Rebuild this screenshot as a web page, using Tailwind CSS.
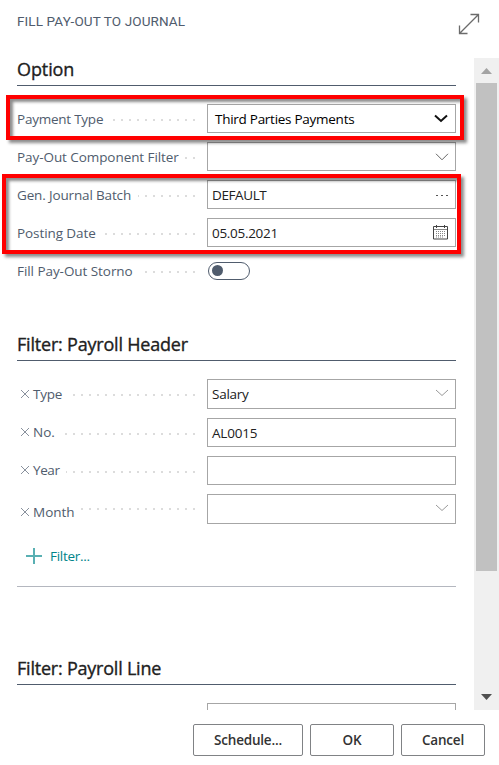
<!DOCTYPE html>
<html lang="en">
<head>
<meta charset="utf-8">
<title>Fill Pay-Out to Journal</title>
<script src="https://cdn.jsdelivr.net/npm/@tailwindcss/browser@4"></script>
</head>
<body class="bg-white">
<div class="relative flex flex-col w-[499px] h-[765px] overflow-hidden bg-white font-['Open_Sans','Noto_Sans',sans-serif] text-[14px] leading-5 text-[#505c6d]">
  <header class="flex justify-between h-[58px] shrink-0 pl-[17px] pr-[19px]">
    <h1 class="pt-[11px] font-['Roboto',sans-serif] text-[13.5px] tracking-[0.12px] whitespace-nowrap">FILL PAY-OUT TO JOURNAL</h1>
    <svg class="mt-[13px] w-[22px] h-[22px]" viewBox="0 0 22 22" fill="none" stroke="#6b6b6b" stroke-width="1.3"><path d="M1.500 20.500 20.500 1.500M12.500 1.500h8v8M1.500 12.500v8h8"/></svg>
  </header>

  <div class="flex h-[652px] shrink-0 overflow-hidden">
    <main class="w-[439px] ml-[17px] shrink-0 text-[13.5px]">
      <section class="h-[263px]">
        <h2 class="h-7 border-b border-[#505c6d] text-[18px] leading-[23px] tracking-[-0.1px] [-webkit-text-stroke:0.35px_#212121] text-[#212121] whitespace-nowrap">Option</h2>
        <div class="flex flex-col gap-[9px] pt-[18px]">
          <div class="flex h-[29px] items-center justify-between">
            <div class="flex w-[178px] items-center justify-between"><span class="whitespace-nowrap tracking-[-0.24px]">Payment Type</span><i class="mt-0.5 h-0.5 w-[82px] shrink-0 bg-[linear-gradient(90deg,transparent_6px,#dcdcdc_6px)] bg-[length:8px_2px] bg-right"></i></div>
            <div class="flex w-[249px] h-full items-center justify-between border border-[#a6a6a6] pl-[7px] pr-[7px] text-black"><span class="whitespace-nowrap tracking-[-0.27px]">Third Parties Payments</span><svg class="w-[14px] h-[9px]" viewBox="0 0 14 9" fill="none" stroke="#111" stroke-width="2"><path d="m1 1.500 6 5.500 6-5.500"/></svg></div>
          </div>
          <div class="flex h-[29px] items-center justify-between">
            <div class="flex w-[178px] items-center justify-between"><span class="whitespace-nowrap tracking-[-0.07px]">Pay-Out Component Filter</span><i class="mt-0.5 h-0.5 w-[10px] shrink-0 bg-[linear-gradient(90deg,transparent_6px,#dcdcdc_6px)] bg-[length:8px_2px] bg-right"></i></div>
            <div class="flex w-[249px] h-full items-center justify-end border border-[#a6a6a6] pr-[6px]"><svg class="w-[14px] h-[8px]" viewBox="0 0 14 8" fill="none" stroke="#666"><path d="m1 .8 6 6 6-6"/></svg></div>
          </div>
          <div class="flex h-[29px] items-center justify-between">
            <div class="flex w-[178px] items-center justify-between"><span class="whitespace-nowrap tracking-[-0.15px]">Gen. Journal Batch</span><i class="mt-0.5 h-0.5 w-[57px] shrink-0 bg-[linear-gradient(90deg,transparent_6px,#dcdcdc_6px)] bg-[length:8px_2px] bg-right"></i></div>
            <div class="flex w-[249px] h-full items-center justify-between border border-[#a6a6a6] pl-1 pr-[6px] text-[#212121]"><span class="whitespace-nowrap tracking-[-0.4px]">DEFAULT</span><svg class="w-[14px] h-[4px]" viewBox="0 0 14 4" fill="#555"><path d="M1 2h2v1H1zM6 2h2v1H6zM11 2h2v1h-2z"/></svg></div>
          </div>
          <div class="flex h-[29px] items-center justify-between">
            <div class="flex w-[178px] items-center justify-between"><span class="whitespace-nowrap tracking-[-0.08px]">Posting Date</span><i class="mt-0.5 h-0.5 w-[90px] shrink-0 bg-[linear-gradient(90deg,transparent_6px,#dcdcdc_6px)] bg-[length:8px_2px] bg-right"></i></div>
            <div class="flex w-[249px] h-full items-center justify-between border border-[#a6a6a6] pl-1 pr-[7px] text-[#212121]"><span class="whitespace-nowrap tracking-[-0.3px]">05.05.2021</span><svg class="w-[15px] h-[15px]" viewBox="0 0 15 15" fill="none" stroke="#444"><path d="M.5 1.500h14v12.500H.5zM3.500 0v3M11.500 0v3"/><path stroke="#888" d="M1 4.500h13"/><path stroke="#888" stroke-dasharray="1 1" d="M3 6.500h10M3 8.500h10M3 10.500h10M3 12h8"/></svg></div>
          </div>
          <div class="flex h-[29px] items-center justify-between">
            <div class="flex w-[178px] items-center justify-between"><span class="whitespace-nowrap tracking-[-0.06px]">Fill Pay-Out Storno</span><i class="mt-0.5 h-0.5 w-[50px] shrink-0 bg-[linear-gradient(90deg,transparent_6px,#dcdcdc_6px)] bg-[length:8px_2px] bg-right"></i></div>
            <div class="w-[248px]"><div class="flex w-[42px] h-[18px] items-center rounded-full border border-[#505c6d] pl-[3px]"><i class="w-[11px] h-[11px] rounded-full bg-[#505c6d]"></i></div></div>
          </div>
        </div>
      </section>

      <section class="h-[266px] border-b border-[#b4b7bf] pt-[12px]">
        <h2 class="h-7 border-b border-[#505c6d] text-[18px] leading-[22px] tracking-[-0.2px] [-webkit-text-stroke:0.35px_#212121] text-[#212121] whitespace-nowrap">Filter: Payroll Header</h2>
        <div class="flex flex-col pt-[18px]">
          <div class="flex h-[30px] mb-[9px] items-center justify-between">
            <div class="flex w-[178px] items-center justify-between"><span class="flex items-center gap-1 pl-1 tracking-[-0.2px]"><svg class="w-[8px] h-[8px]" viewBox="0 0 8 8" stroke="#7c8592" stroke-width=".9"><path d="m0 0 8 8M8 0 0 8"/></svg>Type</span><i class="mt-0.5 h-0.5 w-[122px] shrink-0 bg-[linear-gradient(90deg,transparent_6px,#dcdcdc_6px)] bg-[length:8px_2px] bg-right"></i></div>
            <div class="flex w-[249px] h-full items-center justify-between border border-[#a6a6a6] pl-1 pr-[6px] text-[#212121] tracking-[-0.25px]"><span>Salary</span><svg class="w-[14px] h-[8px] mb-[3px]" viewBox="0 0 14 8" fill="none" stroke="#999"><path d="m1 1 6 5.500 6-5.500"/></svg></div>
          </div>
          <div class="flex h-[29px] mb-[9px] items-center justify-between">
            <div class="flex w-[178px] items-center justify-between"><span class="flex items-center gap-1 pl-1 pb-[2px]"><svg class="w-[8px] h-[8px]" viewBox="0 0 8 8" stroke="#7c8592" stroke-width=".9"><path d="m0 0 8 8M8 0 0 8"/></svg>No.</span><i class="mt-0.5 h-0.5 w-[130px] shrink-0 bg-[linear-gradient(90deg,transparent_6px,#dcdcdc_6px)] bg-[length:8px_2px] bg-right"></i></div>
            <div class="flex w-[249px] h-full items-center border border-[#a6a6a6] pl-1 text-[#212121] tracking-[-0.2px]"><span>AL0015</span></div>
          </div>
          <div class="flex h-[29px] mb-[9px] items-center justify-between">
            <div class="flex w-[178px] items-center justify-between"><span class="flex items-center gap-1 pl-1 pb-[2px] tracking-[-0.4px]"><svg class="w-[8px] h-[8px]" viewBox="0 0 8 8" stroke="#7c8592" stroke-width=".9"><path d="m0 0 8 8M8 0 0 8"/></svg>Year</span><i class="mt-0.5 h-0.5 w-[129px] shrink-0 bg-[linear-gradient(90deg,transparent_6px,#dcdcdc_6px)] bg-[length:8px_2px] bg-right"></i></div>
            <div class="w-[249px] h-full border border-[#a6a6a6]"></div>
          </div>
          <div class="flex h-[30px] items-center justify-between">
            <div class="flex w-[178px] items-center justify-between"><span class="flex items-center gap-1 pl-1 pt-[6px]"><svg class="w-[8px] h-[8px]" viewBox="0 0 8 8" stroke="#7c8592" stroke-width=".9"><path d="m0 0 8 8M8 0 0 8"/></svg>Month</span><i class="h-0.5 w-[114px] shrink-0 bg-[linear-gradient(90deg,transparent_6px,#dcdcdc_6px)] bg-[length:8px_2px] bg-right"></i></div>
            <div class="flex w-[249px] h-full items-center justify-end border border-[#a6a6a6] pr-[6px]"><svg class="w-[14px] h-[8px] mb-[3px]" viewBox="0 0 14 8" fill="none" stroke="#999"><path d="m1 1 6 5.500 6-5.500"/></svg></div>
          </div>
          <div class="flex h-5 mt-[22px] items-center gap-2 pl-[9px] text-[#00848a] tracking-[-0.3px]"><svg class="w-4 h-4" viewBox="0 0 16 16" stroke="#59b0b3" stroke-width="2"><path d="M0 8h16M8 0v16"/></svg>Filter...</div>
        </div>
      </section>

      <section class="pt-[70px]">
        <h2 class="h-7 border-b border-[#505c6d] text-[18px] leading-[22px] tracking-[-0.22px] [-webkit-text-stroke:0.35px_#212121] text-[#212121] whitespace-nowrap">Filter: Payroll Line</h2>
        <div class="mt-[18px] ml-[190px] w-[249px] h-[29px] border border-[#a6a6a6]"></div>
      </section>
    </main>

    <aside class="flex flex-col items-center ml-[18px] w-[25px] shrink-0 bg-[#f0f0f0]">
      <div class="flex h-[25px] items-center"><svg class="w-[11px] h-[6px]" viewBox="0 0 11 6" fill="#a3a3a3"><path d="M0 6 5.500 0 11 6z"/></svg></div>
      <div class="w-[21px] h-[488px] bg-[#c1c1c1]"></div>
      <div class="flex flex-1 items-end pb-[10px]"><svg class="w-[11px] h-[6px]" viewBox="0 0 11 6" fill="#505050"><path d="M0 0h11L5.500 6z"/></svg></div>
    </aside>
  </div>

  <footer class="flex justify-end gap-[7px] pt-[14px] pr-[14px] text-[13.5px] font-semibold tracking-[-0.2px] text-[#333]">
    <button class="w-[110px] h-8 rounded-[2px] border border-[#808285]">Schedule...</button>
    <button class="w-[84px] h-8 rounded-[2px] border border-[#808285]">OK</button>
    <button class="w-[84px] h-8 rounded-[2px] border border-[#808285]">Cancel</button>
  </footer>

  <div class="absolute left-[6px] top-[95px] w-[458px] h-[45px] border-4 border-[#ff0000] shadow-[3px_3px_3px_rgba(0,0,0,.45),inset_3px_3px_3px_rgba(0,0,0,.45)]"></div>
  <div class="absolute left-[2px] top-[174px] w-[459px] h-[80px] border-4 border-[#ff0000] shadow-[3px_3px_3px_rgba(0,0,0,.45),inset_3px_3px_3px_rgba(0,0,0,.45)]"></div>
</div>
</body>
</html>
